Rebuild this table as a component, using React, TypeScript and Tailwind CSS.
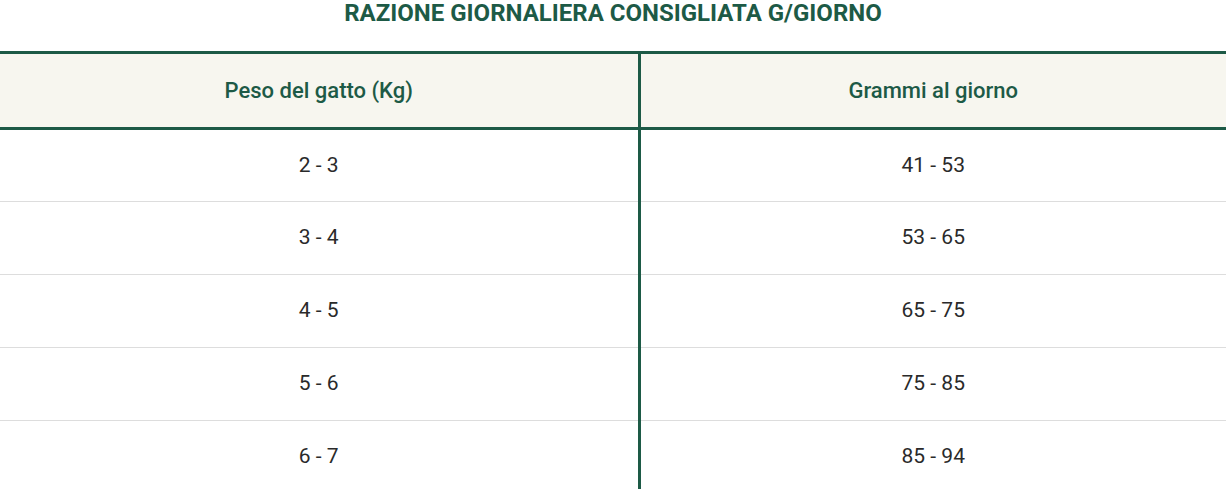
const rows = [
  ['2 - 3', '41 - 53'],
  ['3 - 4', '53 - 65'],
  ['4 - 5', '65 - 75'],
  ['5 - 6', '75 - 85'],
  ['6 - 7', '85 - 94'],
]

export default function App() {
  return (
    <div className="w-[1226px] h-[489px] overflow-hidden bg-white font-['Roboto',sans-serif]">
      <h2 className="h-[51px] text-center text-[24px] font-bold leading-[27px] text-[#1d5a46]">
        RAZIONE GIORNALIERA CONSIGLIATA G/GIORNO
      </h2>
      <table className="w-full border-collapse table-fixed">
        <colgroup>
          <col className="w-[639px]" />
          <col />
        </colgroup>
        <thead>
          <tr className="h-[76px] bg-[#f7f6ef] border-y-[3px] border-[#1d5a46]">
            <th className="border-r-[3px] border-[#1d5a46] text-[22px] font-medium text-[#1d5a46]">
              Peso del gatto (Kg)
            </th>
            <th className="text-[22px] font-medium text-[#1d5a46]">Grammi al giorno</th>
          </tr>
        </thead>
        <tbody>
          {rows.map(([peso, grammi]) => (
            <tr key={peso} className="h-[73px] border-b border-[#dddddd]">
              <td className="border-r-[3px] border-[#1d5a46] text-center text-[21px] text-[#2a2a2a]">{peso}</td>
              <td className="text-center text-[21px] text-[#2a2a2a]">{grammi}</td>
            </tr>
          ))}
        </tbody>
      </table>
    </div>
  )
}
